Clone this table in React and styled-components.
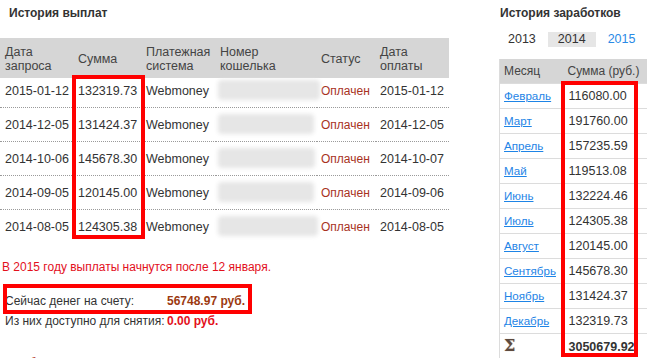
import React from 'react';
import styled, { createGlobalStyle } from 'styled-components';

const Global = createGlobalStyle`
  html, body { margin: 0; padding: 0; background: #fff; overflow: hidden; }
  body { font-family: "Liberation Sans", Arial, sans-serif; color: #333; }
`;

const Page = styled.div`
  display: flex;
  align-items: flex-start;
  width: 647px;
  height: 358px;
  overflow: hidden;
`;

const LeftCol = styled.div`
  width: 450px;
  flex: none;
`;

const RightCol = styled.div`
  width: 148px;
  margin-left: 49px;
  flex: none;
`;

const Title = styled.div`
  margin-top: 6px;
  padding-left: ${p => p.$indent}px;
  font-size: 12px;
  line-height: 15px;
  font-weight: bold;
  color: #333;
`;

const Annotated = styled.div`
  position: relative;
  margin-top: ${p => p.$top || 0}px;
`;

const RedFrame = styled.div`
  position: absolute;
  left: ${p => p.$x}px;
  top: ${p => p.$y}px;
  width: ${p => p.$w}px;
  height: ${p => p.$h}px;
  box-sizing: border-box;
  border: 4px solid #f00;
  pointer-events: none;
`;

const PayTable = styled.table`
  width: 449px;
  table-layout: fixed;
  border-collapse: collapse;
  font-size: 12.5px;
  line-height: 14px;
`;

const HeadCell = styled.th`
  background: #d6d6d6;
  color: #444;
  font-weight: normal;
  text-align: left;
  vertical-align: middle;
  padding: 7px 0 5px ${p => (p.$first ? 5 : 4)}px;
  height: 28px;
`;

const PayRow = styled.tr`
  & > td {
    border-bottom: ${p => (p.$last ? 'none' : '1px dotted #9a9a9a')};
    padding-top: ${p => (p.$first ? 6 : 10)}px;
  }
`;

const Cell = styled.td`
  padding: 10px 0 9px ${p => (p.$first ? 5 : 4)}px;
  white-space: nowrap;
  color: ${p => (p.$status ? '#a8321e' : '#333')};
  font-size: ${p => (p.$status ? '12px' : 'inherit')};
  vertical-align: middle;
`;

const Blur = styled.span`
  display: block;
  width: ${p => p.$w}px;
  height: 20px;
  margin: -4px 0 -2px -2px;
  background: #e6e6e6;
  border-radius: 4px;
  filter: blur(2px);
`;

const Notice = styled.div`
  margin-top: 17px;
  padding-left: 2px;
  font-size: 12px;
  line-height: 14px;
  color: #e3101c;
  white-space: nowrap;
`;

const Balance = styled.div`
  display: grid;
  grid-template-columns: 162px auto;
  padding-left: 5px;
  font-size: 12px;
  line-height: 20px;
  color: #333;
  white-space: nowrap;
`;

const Amount = styled.span`
  font-weight: bold;
  color: ${p => p.$color};
`;

const NextHeading = styled.div`
  margin-top: 25px;
  padding-left: 2px;
  font-size: 12px;
  line-height: 15px;
  color: #b5361e;
`;

const Tabs = styled.div`
  display: flex;
  gap: 2px;
  margin: 11px 0 0 -1px;
`;

const Tab = styled.span`
  padding: 0 10px;
  font-size: 12.5px;
  line-height: 15px;
  background: ${p => (p.$active ? '#e6e6e6' : 'transparent')};
  color: ${p => (p.$link ? '#2a8ae6' : '#333')};
`;

const EarnTable = styled.table`
  width: 148px;
  table-layout: fixed;
  border-collapse: collapse;
  border-left: 1px solid #dcdcdc;
  font-size: 12px;
  line-height: 14px;
`;

const EarnHead = styled.th`
  background: #d6d6d6;
  color: #444;
  font-weight: normal;
  text-align: left;
  white-space: nowrap;
  padding: 5px 0 5px 4px;
`;

const EarnCell = styled.td`
  padding: 5px 0 5px ${p => (p.$sum ? 5 : 4)}px;
  border-top: 1px solid #dcdcdc;
  white-space: nowrap;
  font-size: ${p => (p.$sum ? '12.5px' : '12px')};
  font-weight: ${p => (p.$bold ? 'bold' : 'normal')};
  color: #333;
`;

const MonthLink = styled.a`
  color: #1e84e6;
  font-size: 11.6px;
  text-decoration: underline;
  cursor: pointer;
`;

const Sigma = styled.span`
  font-family: "DejaVu Serif", "Liberation Serif", serif;
  font-size: 16px;
  line-height: 14px;
  font-weight: bold;
  color: #5e4a3e;
  text-shadow: 0 0 1px #b0a090;
`;

const payments = [
  { d: '2015-01-12', s: '132319.73', p: '2015-01-12', w: 102 },
  { d: '2014-12-05', s: '131424.37', p: '2014-12-05', w: 96 },
  { d: '2014-10-06', s: '145678.30', p: '2014-10-07', w: 97 },
  { d: '2014-09-05', s: '120145.00', p: '2014-09-06', w: 96 },
  { d: '2014-08-05', s: '124305.38', p: '2014-08-05', w: 100 },
];

const months = [
  ['Февраль', '116080.00'],
  ['Март', '191760.00'],
  ['Апрель', '157235.59'],
  ['Май', '119513.08'],
  ['Июнь', '132224.46'],
  ['Июль', '124305.38'],
  ['Август', '120145.00'],
  ['Сентябрь', '145678.30'],
  ['Ноябрь', '131424.37'],
  ['Декабрь', '132319.73'],
];

export default function App() {
  return (
    <>
      <Global />
      <Page>
        <LeftCol>
          <Title $indent={9}>История выплат</Title>
          <Annotated $top={17}>
            <PayTable>
              <colgroup>
                <col style={{ width: 74 }} />
                <col style={{ width: 68 }} />
                <col style={{ width: 74 }} />
                <col style={{ width: 101 }} />
                <col style={{ width: 59 }} />
                <col style={{ width: 73 }} />
              </colgroup>
              <thead>
                <tr>
                  <HeadCell $first>Дата<br />запроса</HeadCell>
                  <HeadCell>Сумма</HeadCell>
                  <HeadCell>Платежная<br />система</HeadCell>
                  <HeadCell>Номер<br />кошелька</HeadCell>
                  <HeadCell>Статус</HeadCell>
                  <HeadCell>Дата<br />оплаты</HeadCell>
                </tr>
              </thead>
              <tbody>
                {payments.map((r, i) => (
                  <PayRow key={r.d} $first={i === 0} $last={i === payments.length - 1}>
                    <Cell $first>{r.d}</Cell>
                    <Cell>{r.s}</Cell>
                    <Cell>Webmoney</Cell>
                    <Cell><Blur $w={r.w} /></Cell>
                    <Cell $status>Оплачен</Cell>
                    <Cell>{r.p}</Cell>
                  </PayRow>
                ))}
              </tbody>
            </PayTable>
            <RedFrame $x={72} $y={37} $w={73} $h={164} />
          </Annotated>
          <Notice>В 2015 году выплаты начнутся после 12 января.</Notice>
          <Annotated $top={17}>
            <Balance>
              <span>Сейчас денег на счету:</span>
              <Amount $color="#9c3a10">56748.97 руб.</Amount>
              <span>Из них доступно для снятия:</span>
              <Amount $color="#e3101c">0.00 руб.</Amount>
            </Balance>
            <RedFrame $x={3} $y={-7} $w={249} $h={30} />
          </Annotated>
          <NextHeading>Заработок</NextHeading>
        </LeftCol>
        <RightCol>
          <Title $indent={1}>История заработков</Title>
          <Tabs>
            <Tab>2013</Tab>
            <Tab $active>2014</Tab>
            <Tab $link>2015</Tab>
          </Tabs>
          <Annotated $top={12}>
            <EarnTable>
              <colgroup>
                <col style={{ width: 64 }} />
                <col style={{ width: 84 }} />
              </colgroup>
              <thead>
                <tr>
                  <EarnHead>Месяц</EarnHead>
                  <EarnHead>Сумма (руб.)</EarnHead>
                </tr>
              </thead>
              <tbody>
                {months.map(([m, v]) => (
                  <tr key={m}>
                    <EarnCell><MonthLink>{m}</MonthLink></EarnCell>
                    <EarnCell $sum>{v}</EarnCell>
                  </tr>
                ))}
                <tr>
                  <EarnCell><Sigma>Σ</Sigma></EarnCell>
                  <EarnCell $sum $bold>3050679.92</EarnCell>
                </tr>
              </tbody>
            </EarnTable>
            <RedFrame $x={62} $y={22} $w={77} $h={276} />
          </Annotated>
        </RightCol>
      </Page>
    </>
  );
}
